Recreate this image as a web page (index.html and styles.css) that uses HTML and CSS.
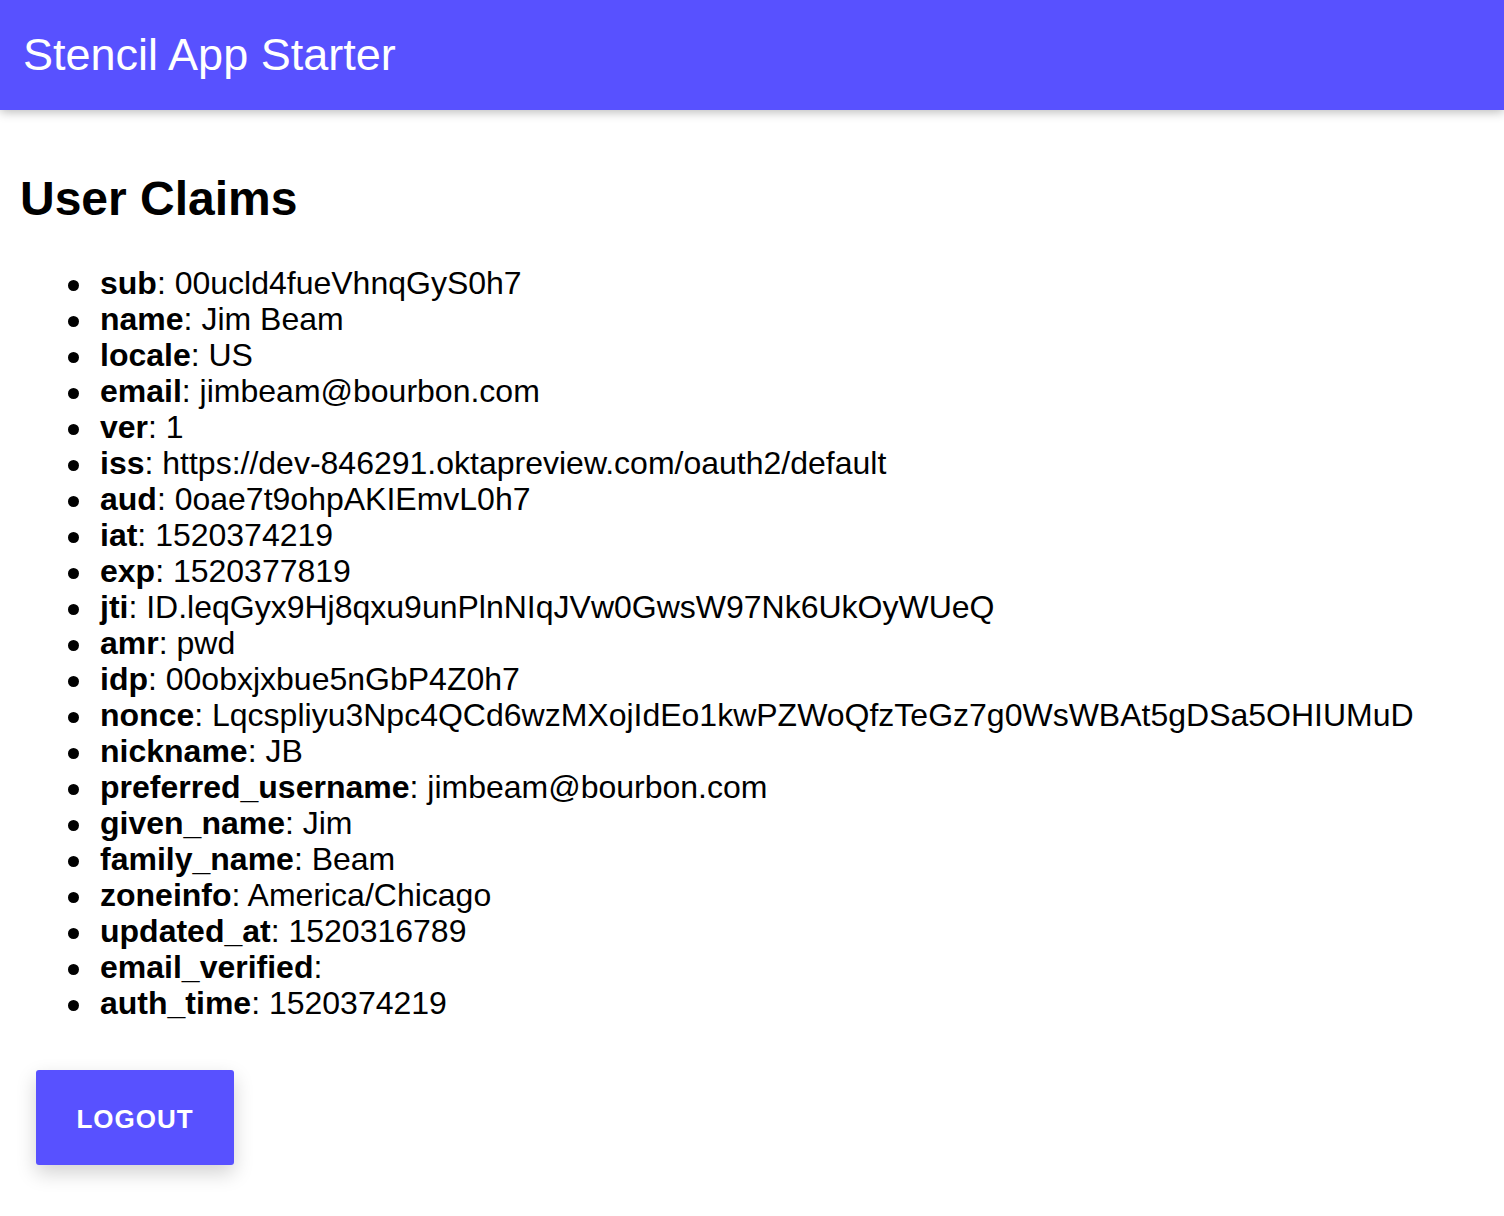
FILE: index.html
```html
<!DOCTYPE html>
<html>
<head>
<meta charset="utf-8">
<title>Stencil App Starter</title>
<link rel="stylesheet" href="styles.css">
</head>
<body>
<header class="app-header">
  <h1 class="app-title">Stencil App Starter</h1>
</header>
<main class="content">
  <h2 class="page-title">User Claims</h2>
  <ul class="claims">
    <li><strong>sub</strong>: 00ucld4fueVhnqGyS0h7</li>
    <li><strong>name</strong>: Jim Beam</li>
    <li><strong>locale</strong>: US</li>
    <li><strong>email</strong>: jimbeam@bourbon.com</li>
    <li><strong>ver</strong>: 1</li>
    <li><strong>iss</strong>: https://dev-846291.oktapreview.com/oauth2/default</li>
    <li><strong>aud</strong>: 0oae7t9ohpAKIEmvL0h7</li>
    <li><strong>iat</strong>: 1520374219</li>
    <li><strong>exp</strong>: 1520377819</li>
    <li><strong>jti</strong>: ID.leqGyx9Hj8qxu9unPlnNIqJVw0GwsW97Nk6UkOyWUeQ</li>
    <li><strong>amr</strong>: pwd</li>
    <li><strong>idp</strong>: 00obxjxbue5nGbP4Z0h7</li>
    <li><strong>nonce</strong>: Lqcspliyu3Npc4QCd6wzMXojIdEo1kwPZWoQfzTeGz7g0WsWBAt5gDSa5OHIUMuD</li>
    <li><strong>nickname</strong>: JB</li>
    <li><strong>preferred_username</strong>: jimbeam@bourbon.com</li>
    <li><strong>given_name</strong>: Jim</li>
    <li><strong>family_name</strong>: Beam</li>
    <li><strong>zoneinfo</strong>: America/Chicago</li>
    <li><strong>updated_at</strong>: 1520316789</li>
    <li><strong>email_verified</strong>: </li>
    <li><strong>auth_time</strong>: 1520374219</li>
  </ul>
  <button class="logout" type="button">LOGOUT</button>
</main>
</body>
</html>
```
FILE: styles.css
```css
html, body {
  margin: 0;
  padding: 0;
  background: #fff;
  font-family: "Liberation Sans", Arial, Helvetica, sans-serif;
  color: #000;
}

.app-header {
  height: 110px;
  background: #5851ff;
  display: flex;
  align-items: center;
  padding-left: 23px;
  box-shadow: 0 2px 10px rgba(0, 0, 0, 0.28);
}

.app-title {
  margin: 0;
  color: #fff;
  font-size: 45px;
  font-weight: 400;
  line-height: normal;
}

.content {
  padding: 0 20px;
}

.page-title {
  margin: 61px 0 0 0;
  font-size: 48px;
  font-weight: 700;
  line-height: normal;
}

.claims {
  margin: 39px 0 0 0;
  padding-left: 80px;
  font-size: 32px;
  line-height: 36px;
  list-style: none;
}

.claims li {
  position: relative;
}

.claims li::before {
  content: "";
  position: absolute;
  left: -32px;
  top: 15px;
  width: 11px;
  height: 11px;
  border-radius: 50%;
  background: #000;
}

.claims li strong {
  font-weight: 700;
}

.logout {
  display: block;
  margin: 49px 0 40px 16px;
  width: 198px;
  height: 95px;
  padding: 4px 0 0 0;
  border: none;
  border-radius: 3px;
  background: #5851ff;
  color: #fff;
  font-family: "Liberation Sans", Arial, Helvetica, sans-serif;
  font-weight: 700;
  font-size: 26px;
  letter-spacing: 1px;
  box-shadow: 0 8px 20px rgba(0, 0, 0, 0.18);
  cursor: pointer;
}
```
